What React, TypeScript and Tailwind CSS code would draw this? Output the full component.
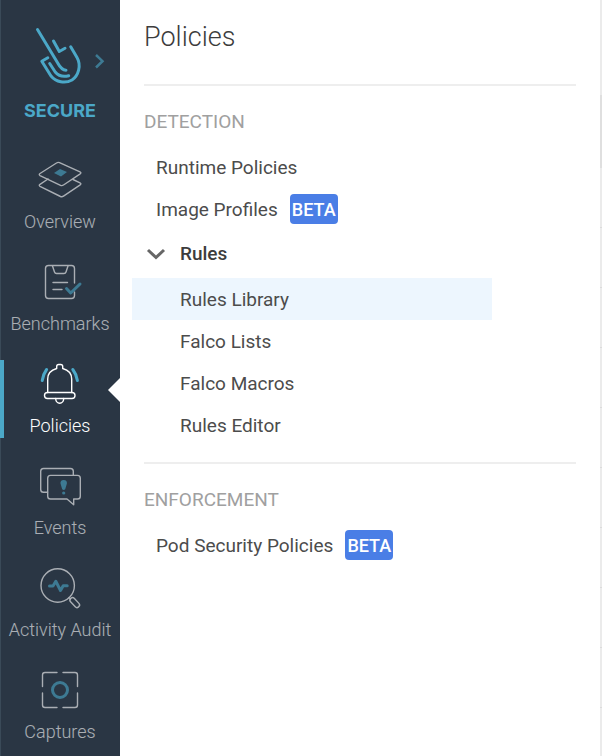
import type { ReactNode } from "react";

const line = {
  fill: "none",
  stroke: "currentColor",
  strokeWidth: 1.4,
  strokeLinecap: "round" as const,
  strokeLinejoin: "round" as const,
};

const accent = { ...line, stroke: "#4ba8c8", strokeWidth: 3 };

function Icon({ children }: { children: ReactNode }) {
  return (
    <svg className="h-[54px] w-[60px]" viewBox="0 0 60 54" aria-hidden="true">
      {children}
    </svg>
  );
}

const navItems = [
  {
    label: "Overview",
    icon: (
      <Icon>
        <path {...line} d="M10 17.5 26.5 7q1.5-1 3-.3L50 15.8q1.7.9.2 2L33.5 29q-1.5 1-3 .3L10 19.6q-1.5-1 0-2.1Z" />
        <path {...line} d="m18 23-8 5.300q-1.500 1.100 0 2L30.500 40.500q1.500.7 3-.3L50.200 28.800q1.500-1.100-.2-2L43 23.500" />
        <path fill="#4ba8c8" d="m24 17 6-4 7 3-6 4.500Z" />
      </Icon>
    ),
  },
  {
    label: "Benchmarks",
    icon: (
      <Icon>
        <path {...line} d="M44.500 25V10.500q0-3-3-3h-23q-3 0-3 3v27q0 3 3 3h23q3 0 3-3V34" />
        <path {...line} d="m22.500 8 2 6q.5 1.500 2 1.500h7.500q1.500 0 2-1.500l2-6M23 24.500h14.500M23 31.500h9" />
        <path {...accent} d="m36.500 30.500 4.200 4.500 9.300-9" />
      </Icon>
    ),
  },
  {
    label: "Policies",
    icon: (
      <Icon>
        <path {...line} d="M17.700 32.500V19c0-5.500 3.500-9 9-10.500V6.500q0-2 2-2h2q2 0 2 2v2c5.500 1.500 9 5 9 10.500v13.500" />
        <rect {...line} x="14.500" y="32.500" width="30.500" height="6" rx="3" />
        <path {...line} d="M25.700 38.500a4 4.800 0 0 0 8 0" />
        <path {...accent} d="M16.600 9.500Q13 14.500 12.200 20.500M42.800 9.500Q46.600 14.500 47.400 20.500" />
      </Icon>
    ),
  },
  {
    label: "Events",
    icon: (
      <Icon>
        <path {...line} d="M17.500 30.300h-4q-2.800 0-2.800-2.800V9.300q0-2.800 2.800-2.800h27q2.800 0 2.800 2.800v4" />
        <path {...line} d="M43.700 37v5.700L37 37H20.500q-2.800 0-2.800-2.800v-18q0-2.800 2.800-2.800h27q2.800 0 2.800 2.800v18q0 2.800-2.800 2.800Z" />
        <path fill="#4ba8c8" d="M33.700 18c2.500 0 3.500 1.700 3.200 3.600l-1.700 5.700q-1.500 1.500-3 0l-1.700-5.700c-.3-1.900.7-3.600 3.200-3.600Z" />
        <circle fill="#4ba8c8" cx="33.700" cy="31" r="1.600" />
      </Icon>
    ),
  },
  {
    label: "Activity Audit",
    icon: (
      <Icon>
        <circle {...line} cx="27.700" cy="21.500" r="16.700" />
        <path {...line} d="m39 33.500 1.500 1.500" />
        <rect {...line} x="39" y="36" width="11.500" height="5" rx="2.300" transform="rotate(47 44.700 38.500)" />
        <path {...accent} d="M19.500 22h3.500l2.800-4.700 4.700 9.200 2.700-4.700h4" />
      </Icon>
    ),
  },
  {
    label: "Captures",
    icon: (
      <Icon>
        <path {...line} d="M27 6.500H15q-2.500 0-2.500 2.500v11.500M33 6.500h12q2.500 0 2.500 2.500v11.500M12.500 27v12q0 2.500 2.500 2.500h12M47.500 27v12q0 2.500-2.500 2.500H33" />
        <circle {...accent} cx="30" cy="24" r="7.500" />
      </Icon>
    ),
  },
];

function Beta() {
  return (
    <span className="flex h-[30px] w-12 items-center justify-center rounded bg-[#4a7ee6] pt-px text-lg font-medium text-white">
      BETA
    </span>
  );
}

function MenuLink({ label, beta }: { label: string; beta?: boolean }) {
  return (
    <a href="#" className="flex h-[42px] items-center gap-3 pl-3">
      <span className="pt-[2px]">{label}</span>
      {beta && <Beta />}
    </a>
  );
}

export default function App() {
  const rules = ["Rules Library", "Falco Lists", "Falco Macros", "Rules Editor"];
  return (
    <div className="flex h-screen overflow-hidden bg-white font-[Roboto,sans-serif] text-[19px] leading-6 font-normal text-[#4c4c4c]">
      <nav className="flex w-[120px] shrink-0 flex-col border-l border-[#3a4a58] bg-[#2a3644] font-light">
        <button className="flex h-[156px] shrink-0 flex-col text-[#4ba8c8]" aria-label="Secure, switch product">
          <svg className="-ml-px h-[99px] w-[120px]" viewBox="0 0 120 99" aria-hidden="true">
            <g fill="none" stroke="currentColor" strokeWidth="3" strokeLinecap="round" strokeLinejoin="round">
              <path d="M37.500 29.500 58 63.500q3.500 6.500 8 6.700M53.500 41l5.800 10.500L65 48.300" />
              <path d="M70.700 46.800 77 57.500c4.500 8 1.500 18-5 22.500-7 4-16 2-21-4L41.800 61.200l6-3.500" />
              <path d="m49.700 63.500 5.500 8.500q5 6 13.500 3.700" />
            </g>
            <path d="m96 55 6.500 6.200L96 67.500" fill="none" stroke="currentColor" strokeWidth="2.500" opacity=".6" />
          </svg>
          <span className="-ml-px w-[120px] text-center font-[Inter,sans-serif] text-lg leading-6 font-bold">SECURE</span>
        </button>
        <ul className="flex flex-col gap-6">
          {navItems.map((item) => {
            const active = item.label === "Policies";
            return (
              <li key={item.label} className={active ? "relative -ml-px" : "-ml-px"}>
                <a
                  href="#"
                  className={
                    active
                      ? "flex h-[78px] flex-col items-center text-white"
                      : "flex h-[78px] flex-col items-center text-white opacity-60"
                  }
                >
                  {item.icon}
                  <span className="text-lg leading-6 whitespace-nowrap">{item.label}</span>
                </a>
                {active && (
                  <>
                    <span className="absolute inset-y-0 left-0 w-1 bg-[#4ba8c8]" />
                    <svg className="absolute top-[18px] right-0 h-6 w-3" viewBox="0 0 12 24" aria-hidden="true">
                      <path fill="#fff" d="M12 0v24L0 12Z" />
                    </svg>
                  </>
                )}
              </li>
            );
          })}
        </ul>
      </nav>

      <main className="min-w-0 flex-1 px-6">
        <h1 className="flex h-[86px] items-center border-b-2 border-[#eee] pb-[10px] text-[27px] font-light text-[#3c3c3c]">
          Policies
        </h1>
        <section className="border-b-2 border-[#eee] pt-[18px] pb-4">
          <h2 className="flex h-[42px] items-start pt-[6px] text-[#a0a0a0]">DETECTION</h2>
          <MenuLink label="Runtime Policies" />
          <MenuLink label="Image Profiles" beta />
          <button className="flex h-12 items-center gap-[14px] pb-px pl-[2px] font-medium text-[#3c3c3c]">
            <svg className="h-5 w-5" viewBox="0 0 20 20" aria-hidden="true">
              <path d="m2 6 8 7.500L18 6" fill="none" stroke="#666" strokeWidth="3" />
            </svg>
            Rules
          </button>
          <ul>
            {rules.map((rule, i) => (
              <li key={rule} className={i === 0 ? "-ml-3 w-5/6 bg-[#edf6fe] pl-3" : ""}>
                <a href="#" className="flex h-[42px] items-center pt-[2px] pl-9">
                  {rule}
                </a>
              </li>
            ))}
          </ul>
        </section>
        <section className="pt-[18px]">
          <h2 className="flex h-[42px] items-start pt-[6px] text-[#a0a0a0]">ENFORCEMENT</h2>
          <MenuLink label="Pod Security Policies" beta />
        </section>
      </main>

      <div className="flex w-[2px] shrink-0 flex-col bg-[#ebebeb]">
        <div className="h-[95px] shrink-0" />
        <div className="h-[73px] shrink-0 bg-[#dfdfdf]" />
        {Array.from({ length: 10 }, (_, i) => (
          <div key={i} className="h-[60px] shrink-0 border-b border-[#dcdcdc]" />
        ))}
      </div>
    </div>
  );
}
